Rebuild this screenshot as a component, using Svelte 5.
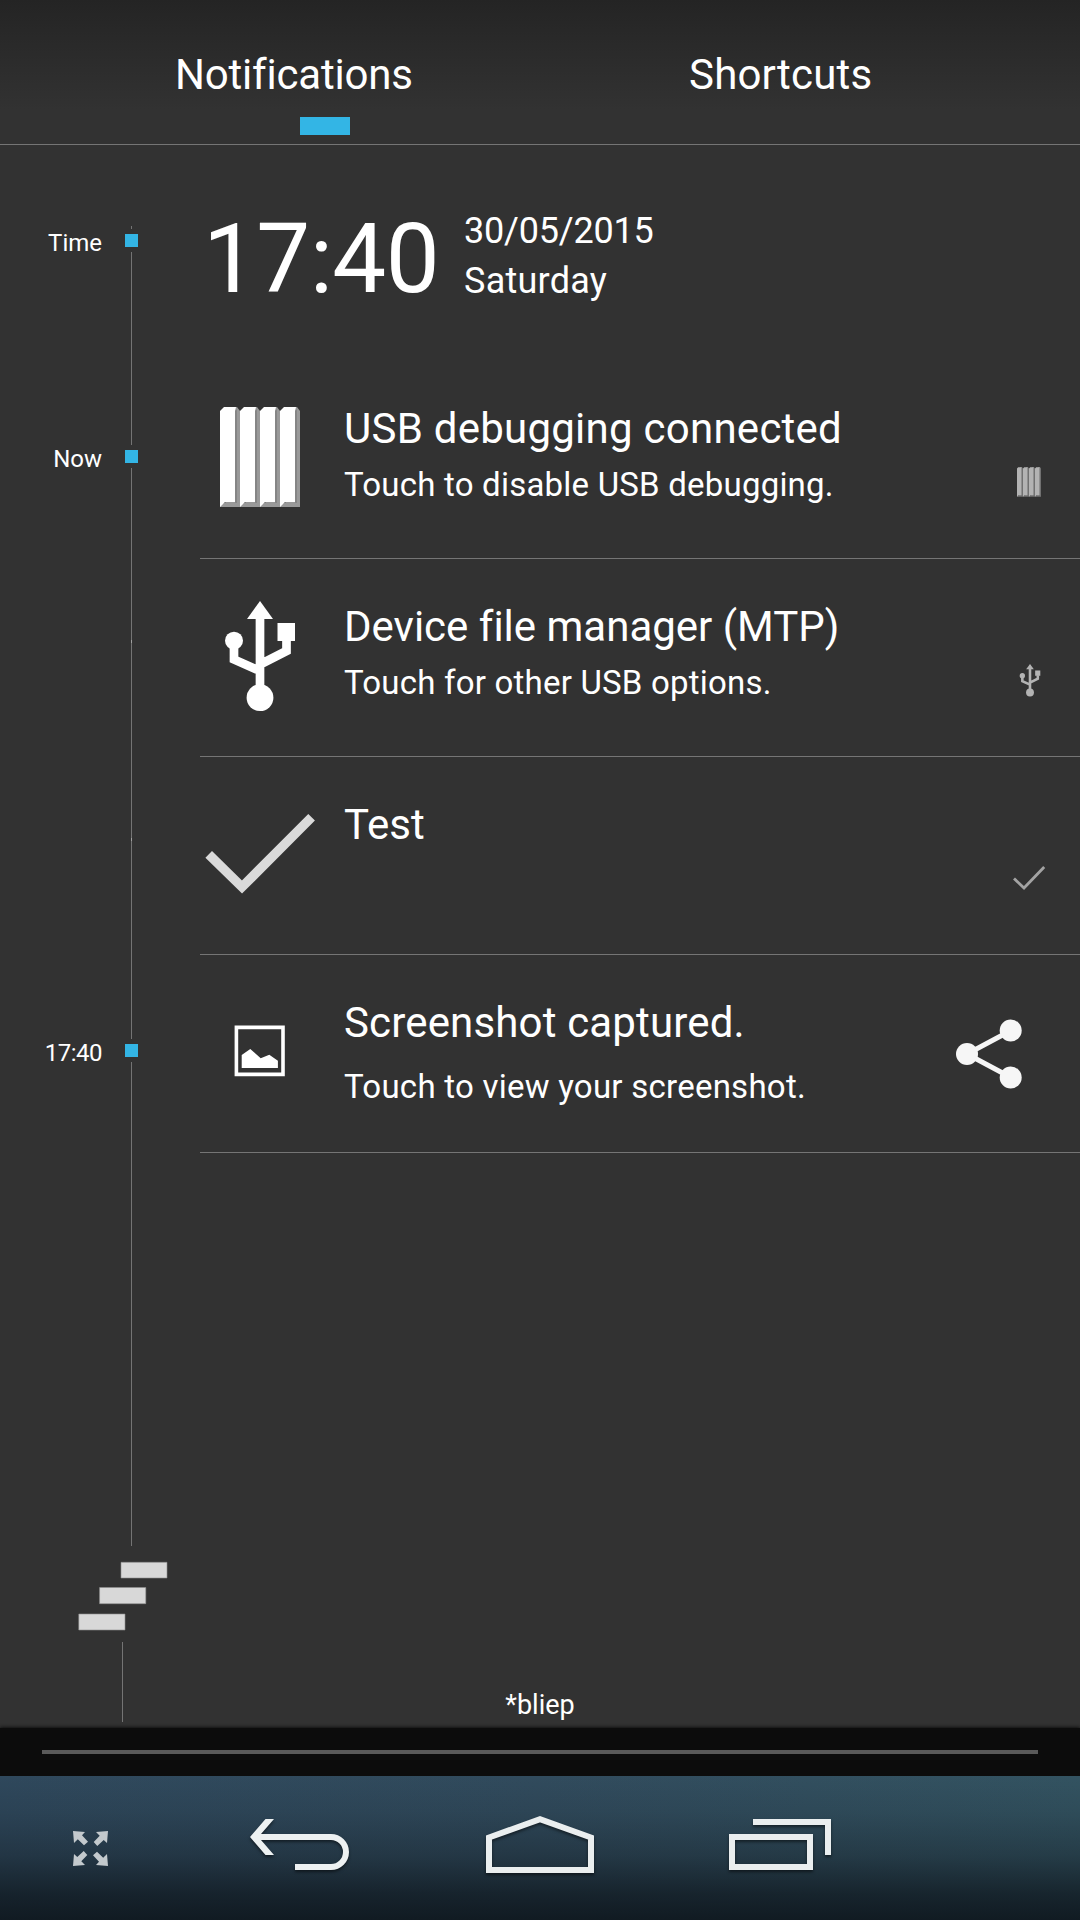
<script lang="ts">
  const rows = [
    { icon: 'bars', title: 'USB debugging connected', sub: 'Touch to disable USB debugging.', label: 'Now' },
    { icon: 'usb', title: 'Device file manager (MTP)', sub: 'Touch for other USB options.', label: '' },
    { icon: 'check', title: 'Test', sub: '', label: '' },
    { icon: 'image', title: 'Screenshot captured.', sub: 'Touch to view your screenshot.', label: '17:40' }
  ];
</script>

{#snippet glyph(name)}
  {#if name === 'bars'}
    {#each [0, 20, 40, 60] as x}
      <path d="M{x + 10} 1H{x + 17}L{x + 20} 5V101H{x}V99L{x + 10} 94Z" fill="#999" />
      <path d="M{x + 15} 4L{x + 17} 3.5V97H{x + 15}Z" fill="#858585" />
      <path d="M{x} 5L{x + 4} 1H{x + 16}L{x + 15} 5V96H{x + 5}L{x} 101Z" fill="#fff" />
    {/each}
  {:else if name === 'usb'}
    <path d="M40 0L53 18H27Z" fill="#fff" />
    <path d="M40 17V90M14 40V58.5L40 70M66.5 38V50L40 63.5" fill="none" stroke="#fff" stroke-width="8.7" />
    <circle cx="14" cy="39.7" r="9" fill="#fff" />
    <circle cx="40" cy="96.7" r="13.4" fill="#fff" />
    <path d="M57.5 22H75V40H57.5Z" fill="#fff" />
  {/if}
{/snippet}

<div class="screen">
  <header>
    <nav class="tabs">
      <span class="tab first">Notifications</span>
      <span class="tab second">Shortcuts</span>
    </nav>
    <div class="indicator"></div>
  </header>

  <main>
    <section class="clock-row">
      <div class="label"><span>Time</span></div>
      <div class="rail">
        <i class="line stub"></i><i class="node"></i><i class="line rest"></i>
      </div>
      <div class="clock">
        <span class="time">17:40</span>
        <div class="date"><span class="day-num">30/05/2015</span><span class="day">Saturday</span></div>
      </div>
    </section>

    {#each rows as row}
      <section class="row">
        <div class="label"><span class:num={row.label === '17:40'}>{row.label}</span></div>
        <div class="rail">
          {#if row.label}
            <i class="line lead"></i><i class="node"></i><i class="line rest"></i>
          {:else}
            <i class="line plain"></i><i class="joint"></i><i class="line rest"></i>
          {/if}
        </div>
        <div class="card">
          <div class="icon {row.icon}">
            {#if row.icon === 'bars'}
              <svg width="80" height="102" viewBox="0 0 80 102">{@render glyph('bars')}</svg>
            {:else if row.icon === 'usb'}
              <svg width="80" height="112" viewBox="0 0 80 112">{@render glyph('usb')}</svg>
            {:else if row.icon === 'check'}
              <svg width="120" height="90" viewBox="0 0 120 90"><path d="M8.7 44.3L42 77L111.6 7.3" fill="none" stroke="#dadada" stroke-width="9.4" /></svg>
            {:else}
              <svg width="52" height="52" viewBox="0 0 52 52">
                <path d="M2.4 2.4H49V49.4H2.4Z" fill="none" stroke="#fff" stroke-width="3.6" />
                <path d="M7.7 30L16.3 24L26.7 33.3L35.3 29.7L43.9 35.7V43H7.7Z" fill="#fff" />
              </svg>
            {/if}
          </div>
          <div class="text">
            <div class="title {row.icon}">{row.title}</div>
            <div class="sub {row.icon}">{row.sub}</div>
          </div>
          {#if row.icon === 'image'}
            <div class="share">
              <svg width="68" height="72" viewBox="0 0 68 72">
                <path d="M55 12.5L11 36L55 59.5" fill="none" stroke="#f6f6f6" stroke-width="5" />
                <g fill="#f6f6f6"><circle cx="54.7" cy="12.5" r="11" /><circle cx="11" cy="36" r="11" /><circle cx="54.7" cy="59.5" r="11" /></g>
              </svg>
            </div>
          {:else}
            <div class="mini {row.icon}">
              {#if row.icon === 'check'}
                <svg width="34" height="26" viewBox="0 0 34 26"><path d="M2 13.5L12 23L32.2 2" fill="none" stroke="#a3a3a3" stroke-width="2.8" /></svg>
              {:else if row.icon === 'bars'}
                <svg class="dim" width="24" height="30" viewBox="0 0 80 102" preserveAspectRatio="none">{@render glyph('bars')}</svg>
              {:else}
                <svg class="dim" width="24" height="33" viewBox="0 0 80 112">{@render glyph('usb')}</svg>
              {/if}
            </div>
          {/if}
        </div>
      </section>
    {/each}

    <div class="tail"><i class="line"></i></div>
    <svg class="steps" width="92" height="70" viewBox="0 0 92 70">
      <path d="M43 1.3H89V17H43ZM21.6 26.5H67.8V42.7H21.6ZM.8 53H47V69H.8Z" fill="#d8d8d8" stroke="#8f8f8f" stroke-width=".6" />
    </svg>
    <div class="foot-line"><i class="line"></i></div>
  </main>

  <div class="carrier">*bliep</div>

  <div class="handle"><i></i></div>

  <footer>
    <svg width="1080" height="144" viewBox="0 0 1080 144">
      <g fill="#c3c9cd">
        {#each [0, 90, 180, 270] as a}
          <path transform="rotate({a} 90.5 72.5)" d="M73 55L85 56L82 59.3L88 65.7L84 69.3L77.8 63.3L74 67Z" />
        {/each}
      </g>
      <g class="keys">
        <path d="M250 61L265.5 43H274L261 58H331A18 18 0 0 1 331 94H295V88H331A12 12 0 0 0 331 64H261L274 79H265.5Z" fill="#edf1f2" />
        <path d="M489 61.5L540 43.2L591 61.5V94H489Z" fill="none" stroke="#eaeeef" stroke-width="6" />
        <path d="M732 61H810V91H732ZM753 46H828V79" fill="none" stroke="#eaeeef" stroke-width="6" />
      </g>
    </svg>
  </footer>
</div>

<style>
  :global(body) { margin: 0; background: #313131; }
  .screen {
    width: 1080px; height: 1920px; overflow: hidden;
    display: flex; flex-direction: column;
    background: linear-gradient(#242424 0, #282828 30px, #323232 110px);
    color: #fff; font-family: Roboto, "Liberation Sans", sans-serif;
    font-variant-ligatures: none;
  }
  header { height: 144px; border-bottom: 1px solid #757575; flex: none; }
  .tabs { display: flex; height: 117px; font-size: 42px; line-height: 50px; }
  .tab { padding-top: 50px; white-space: nowrap; }
  .first { padding-left: 175px; width: 514px; letter-spacing: -0.2px; }
  .second { letter-spacing: 0.2px; }
  .indicator { width: 50px; height: 18px; margin-left: 300px; background: #33b5e5; }
  main { height: 1578px; flex: none; display: flex; flex-direction: column; }
  section { display: grid; grid-template-columns: 102px 23px 13px 62px 880px; flex: none; }
  .label { grid-column: 1; font-size: 24px; line-height: 28px; text-align: right; white-space: nowrap; }
  .num { letter-spacing: -0.5px; }
  .rail { grid-column: 3; display: flex; flex-direction: column; align-items: center; }
  .line { display: block; width: 1px; background: #747474; }
  .node { display: block; width: 13px; height: 13px; margin: 5px 0; background: #33b5e5; flex: none; }
  .rest { flex: 1; }
  .stub { height: 3px; margin-top: 81px; }
  .clock-row { height: 216px; }
  .clock-row .label { padding-top: 84px; }
  .clock { grid-column: 5; display: flex; }
  .time { font-size: 96px; line-height: 112px; letter-spacing: -0.6px; padding: 58px 0 0 3px; width: 264px; box-sizing: border-box; white-space: nowrap; }
  .date { display: flex; flex-direction: column; font-size: 36px; line-height: 50px; padding-top: 61px; }
  .day-num { letter-spacing: -0.2px; }
  .day { letter-spacing: 0.25px; }
  .row { height: 198px; }
  .row .label { padding-top: 84px; }
  .lead { height: 84px; }
  .plain { height: 81px; }
  .joint { display: block; width: 1px; height: 3px; background: #a0a0a0; }
  .card { grid-column: 5; display: flex; height: 197px; border-bottom: 1px solid #757575; }
  .icon { width: 120px; height: 192px; display: flex; align-items: center; justify-content: center; flex: none; }
  .icon.usb, .icon.check { height: 196px; }
  .text { margin-left: 24px; padding-top: 43px; width: 560px; white-space: nowrap; }
  .title { font-size: 42px; line-height: 50px; }
  .title.bars { letter-spacing: 0.25px; }
  .title.image { letter-spacing: 0.16px; }
  .sub { font-size: 33px; line-height: 40px; margin-top: 11px; letter-spacing: 0.21px; }
  .sub.image { margin-top: 19px; letter-spacing: 0.25px; }
  .mini { width: 60px; margin-left: 95px; display: flex; justify-content: center; padding-top: 106px; }
  .mini.check { padding-top: 108px; }
  .mini.usb { width: 62px; padding-top: 105px; }
  .dim { opacity: .63; }
  .share { margin-left: 52px; padding-top: 63px; }
  .tail { height: 393px; padding-left: 131px; flex: none; }
  .tail .line { height: 393px; }
  .steps { margin: 15px 0 0 78px; flex: none; }
  .foot-line { padding: 11px 0 0 122px; }
  .foot-line .line { height: 80px; }
  .carrier { height: 0; text-align: center; font-size: 27px; line-height: 32px; margin-top: -34px; padding-bottom: 39px; flex: none; }
  .handle { height: 48px; background: #0c0c0c; box-shadow: 0 -1px 3px #111; flex: none; display: flex; align-items: center; justify-content: center; }
  .handle i { width: 996px; height: 4px; background: #5a5a5a; }
  footer {
    height: 144px; flex: none;
    background: linear-gradient(rgba(15, 24, 31, 0) 0, rgba(15, 24, 31, .12) 25%, rgba(15, 24, 31, .38) 55%, rgba(15, 24, 31, .78) 82%, rgba(15, 24, 31, .95) 100%),
      linear-gradient(90deg, #2f485c, #314b5d 50%, #335361);
  }
  footer svg { display: block; }
  .keys { filter: drop-shadow(0 2px 1.5px rgba(0, 0, 0, .5)); }
</style>
